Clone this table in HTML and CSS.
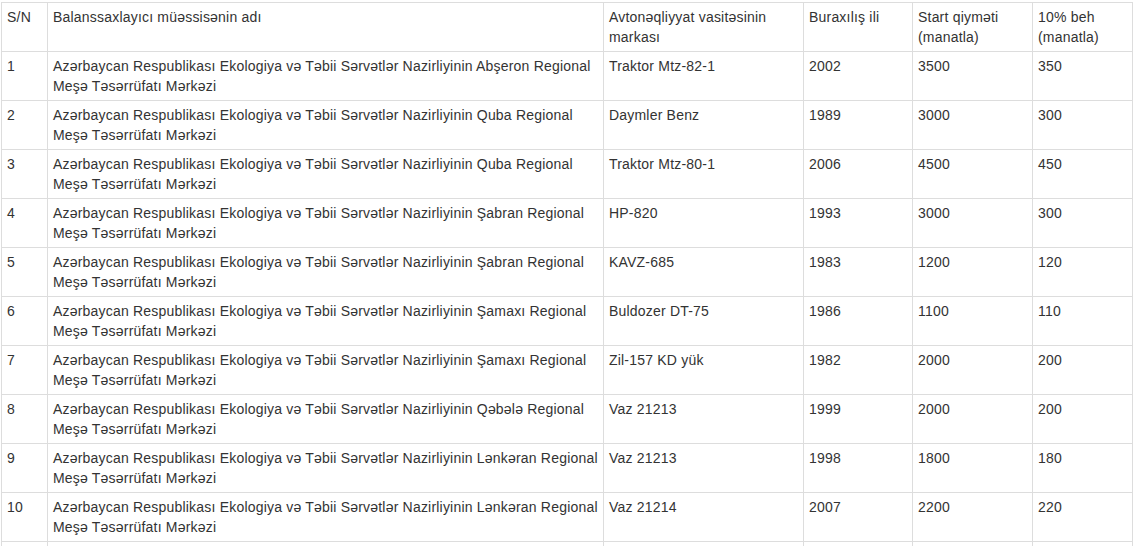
FILE: index.html
```html
<!DOCTYPE html>
<html>
<head>
    <title>Avtonəqliyyat vasitələri</title>
    <link rel="stylesheet" href="styles.css">
</head>
<body>
    <div class="page">
        <table class="lots">
            <colgroup>
                <col class="c-no">
                <col class="c-org">
                <col class="c-mark">
                <col class="c-year">
                <col class="c-price">
                <col class="c-dep">
            </colgroup>
            <thead>
                <tr>
                    <th>S/N</th>
                    <th>Balanssaxlayıcı müəssisənin adı</th>
                    <th>Avtonəqliyyat vasitəsinin markası</th>
                    <th>Buraxılış ili</th>
                    <th>Start qiyməti (manatla)</th>
                    <th>10% beh (manatla)</th>
                </tr>
            </thead>
            <tbody>
                <tr>
                    <td>1</td>
                    <td>Azərbaycan Respublikası Ekologiya və Təbii Sərvətlər Nazirliyinin Abşeron Regional Meşə Təsərrüfatı Mərkəzi</td>
                    <td>Traktor Mtz-82-1</td>
                    <td>2002</td>
                    <td>3500</td>
                    <td>350</td>
                </tr>
                <tr>
                    <td>2</td>
                    <td>Azərbaycan Respublikası Ekologiya və Təbii Sərvətlər Nazirliyinin Quba Regional Meşə Təsərrüfatı Mərkəzi</td>
                    <td>Daymler Benz</td>
                    <td>1989</td>
                    <td>3000</td>
                    <td>300</td>
                </tr>
                <tr>
                    <td>3</td>
                    <td>Azərbaycan Respublikası Ekologiya və Təbii Sərvətlər Nazirliyinin Quba Regional Meşə Təsərrüfatı Mərkəzi</td>
                    <td>Traktor Mtz-80-1</td>
                    <td>2006</td>
                    <td>4500</td>
                    <td>450</td>
                </tr>
                <tr>
                    <td>4</td>
                    <td>Azərbaycan Respublikası Ekologiya və Təbii Sərvətlər Nazirliyinin Şabran Regional Meşə Təsərrüfatı Mərkəzi</td>
                    <td>HP-820</td>
                    <td>1993</td>
                    <td>3000</td>
                    <td>300</td>
                </tr>
                <tr>
                    <td>5</td>
                    <td>Azərbaycan Respublikası Ekologiya və Təbii Sərvətlər Nazirliyinin Şabran Regional Meşə Təsərrüfatı Mərkəzi</td>
                    <td>KAVZ-685</td>
                    <td>1983</td>
                    <td>1200</td>
                    <td>120</td>
                </tr>
                <tr>
                    <td>6</td>
                    <td>Azərbaycan Respublikası Ekologiya və Təbii Sərvətlər Nazirliyinin Şamaxı Regional Meşə Təsərrüfatı Mərkəzi</td>
                    <td>Buldozer DT-75</td>
                    <td>1986</td>
                    <td>1100</td>
                    <td>110</td>
                </tr>
                <tr>
                    <td>7</td>
                    <td>Azərbaycan Respublikası Ekologiya və Təbii Sərvətlər Nazirliyinin Şamaxı Regional Meşə Təsərrüfatı Mərkəzi</td>
                    <td>Zil-157 KD yük</td>
                    <td>1982</td>
                    <td>2000</td>
                    <td>200</td>
                </tr>
                <tr>
                    <td>8</td>
                    <td>Azərbaycan Respublikası Ekologiya və Təbii Sərvətlər Nazirliyinin Qəbələ Regional Meşə Təsərrüfatı Mərkəzi</td>
                    <td>Vaz 21213</td>
                    <td>1999</td>
                    <td>2000</td>
                    <td>200</td>
                </tr>
                <tr>
                    <td>9</td>
                    <td>Azərbaycan Respublikası Ekologiya və Təbii Sərvətlər Nazirliyinin Lənkəran Regional Meşə Təsərrüfatı Mərkəzi</td>
                    <td>Vaz 21213</td>
                    <td>1998</td>
                    <td>1800</td>
                    <td>180</td>
                </tr>
                <tr>
                    <td>10</td>
                    <td>Azərbaycan Respublikası Ekologiya və Təbii Sərvətlər Nazirliyinin Lənkəran Regional Meşə Təsərrüfatı Mərkəzi</td>
                    <td>Vaz 21214</td>
                    <td>2007</td>
                    <td>2200</td>
                    <td>220</td>
                </tr>
                <tr class="spacer">
                    <td></td>
                    <td></td>
                    <td></td>
                    <td></td>
                    <td></td>
                    <td></td>
                </tr>
            </tbody>
        </table>
    </div>
</body>
</html>
```

FILE: styles.css
```css
html {
    overflow: hidden;
}

body {
    margin: 0;
    background: #fff;
    font-family: "Liberation Sans", Arial, sans-serif;
    font-size: 14px;
    line-height: 20px;
    letter-spacing: 0.2px;
    color: #333;
}

.page {
    padding: 2px 0 0 1px;
}

.lots {
    width: 1131px;
    table-layout: fixed;
    border-collapse: collapse;
    border-top: 1px solid #d6d6d6;
}

.lots th,
.lots td {
    padding: 4px 4px 4px 5px;
    border: 1px solid #ddd;
    text-align: left;
    vertical-align: top;
    font-weight: normal;
}

.lots .spacer td {
    height: 40px;
}

/* sütun enləri */
.c-no { width: 46px; }
.c-org { width: 556px; }
.c-mark { width: 200px; }
.c-year { width: 109px; }
.c-price { width: 120px; }
.c-dep { width: 100px; }
```
